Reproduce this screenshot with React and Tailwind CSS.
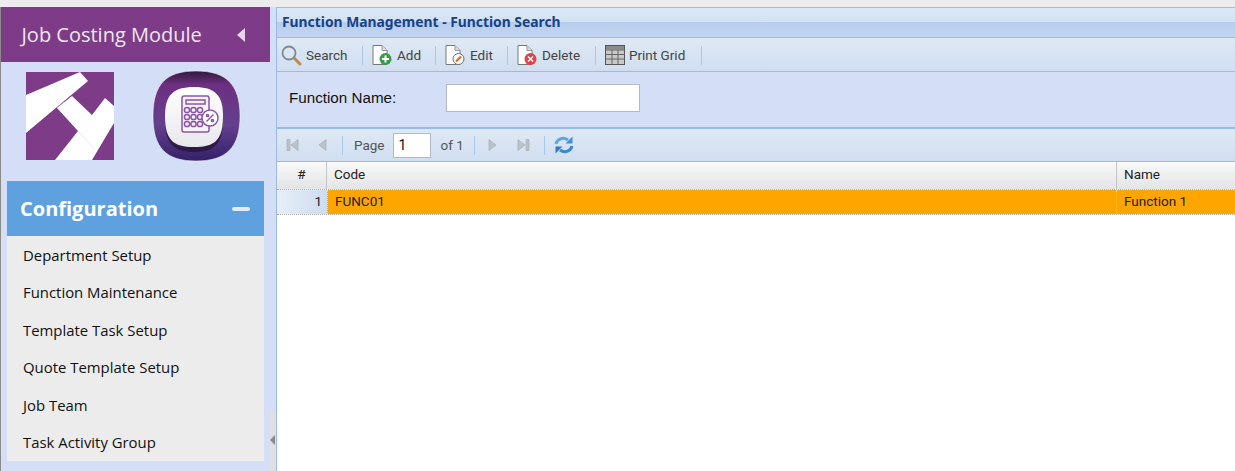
import React from 'react';

const menuItems = ['Department Setup', 'Function Maintenance', 'Template Task Setup', 'Quote Template Setup', 'Job Team', 'Task Activity Group'];

const DocIcon = ({ children }) => (
  <svg width="20" height="20" viewBox="0 0 20 20">
    <path d="M1 .5h9l5 5v14h-14z" fill="#fff" stroke="#77797c" />
    <path d="M10 .5v5h5" fill="#dcdcdc" stroke="#999" />
    {children}
  </svg>
);

const Sep = () => <div className="w-px h-[19px] bg-[#a9c6ec]" />;

const ToolButton = ({ icon, label, className }) => (
  <div className={`flex items-center ${className}`}>
    {icon}
    <span>{label}</span>
  </div>
);

const PagerArrow = ({ d }) => (
  <svg width="16" height="16" viewBox="0 0 16 16"><path d={d} fill="#bcc2c8" stroke="#a8aeb4" strokeWidth="0.7" /></svg>
);

const LogoMark = () => (
  <svg width="88" height="88" viewBox="0 0 88 88">
    <rect width="88" height="88" fill="#7e3b87" />
    <path d="M0 23L54 0L62 9L0 61z" fill="#fff" />
    <path d="M31 36L46 24L66 43L79 26L88 34V51L66 88H29L52 59z" fill="#fff" />
    <path d="M31 36L38 30M52 59L68 76" stroke="#d8d2e0" strokeWidth="0.6" />
  </svg>
);

const CalcLogo = () => (
  <svg width="90" height="92" viewBox="0 0 90 92">
    <defs>
      <linearGradient id="ring" x1="0" y1="0" x2="0" y2="1">
        <stop offset="0" stopColor="#2f1a3c" />
        <stop offset="0.15" stopColor="#6e2f80" />
        <stop offset="0.6" stopColor="#64408f" />
        <stop offset="1" stopColor="#34206a" />
      </linearGradient>
      <linearGradient id="face" x1="0" y1="0" x2="0" y2="1">
        <stop offset="0" stopColor="#fff" />
        <stop offset="1" stopColor="#e8e8ec" />
      </linearGradient>
    </defs>
    <path d="M44 1C74 1 88 14 88 46C88 78 74 91 44 91C14 91 1 78 1 46C1 14 14 1 44 1z" fill="url(#ring)" stroke="#fff" strokeOpacity="0.5" />
    <path d="M42 21C62 21 71 28 71 50C71 74 62 82 42 82C22 82 13 74 13 50C13 28 22 21 42 21z" fill="#24122f" opacity="0.7" />
    <path d="M42 17C63 17 71 25 71 46C71 70 63 77 42 77C21 77 13 70 13 46C13 25 21 17 42 17z" fill="url(#face)" />
    <g fill="none" stroke="#8a55a8" strokeWidth="1.5">
      <rect x="30" y="26" width="27" height="36" rx="2" fill="#f6f3f8" />
      <rect x="34" y="30" width="19" height="4" />
      <circle cx="35" cy="40" r="2.600" /><circle cx="41.500" cy="40" r="2.600" /><circle cx="48" cy="40" r="2.600" />
      <circle cx="35" cy="47" r="2.600" /><circle cx="41.500" cy="47" r="2.600" /><circle cx="48" cy="47" r="2.600" />
      <circle cx="35" cy="54" r="2.600" /><circle cx="41.500" cy="54" r="2.600" /><circle cx="48" cy="54" r="2.600" />
      <circle cx="58" cy="48" r="8" fill="#fff" />
      <path d="M54.500 51.500l7-7" />
      <circle cx="55.500" cy="45.500" r="1.100" /><circle cx="60.500" cy="50.500" r="1.100" />
    </g>
  </svg>
);

const Sidebar = () => (
  <aside className="w-[269px] shrink-0 bg-[#d5def7] flex flex-col" style={{ fontFamily: '"Open Sans", sans-serif' }}>
    <div className="h-[55px] bg-[#7e3b87] flex items-center justify-between pl-[20.500px] pr-[25px] text-[#f0e6f2] text-[20px]">
      <span>Job Costing Module</span>
      <span className="w-0 h-0 border-y-[7px] border-y-transparent border-r-[8px] border-r-[#e6d6ea]" />
    </div>
    <div className="h-[119px] flex items-start pl-[25px] pt-[10px]">
      <LogoMark />
      <div className="ml-[38px] -mt-[2px]"><CalcLogo /></div>
    </div>
    <div className="mx-[6px] bg-[#ececec]">
      <div className="h-[55px] bg-[#5fa0de] flex items-center justify-between pl-[13px] pr-[14px] text-white text-[20px] font-bold">
        <span>Configuration</span>
        <span className="w-[18px] h-[4px] rounded-sm bg-[#e3edf8]" />
      </div>
      <ul className="h-[225px] pl-[16px] flex flex-col text-[14.900px] text-[#111]">
        {menuItems.map((item) => (
          <li key={item} className="h-[37.600px] flex items-center">{item}</li>
        ))}
      </ul>
    </div>
  </aside>
);

const Toolbar = () => (
  <div className="h-[34px] pt-px border-b border-[#99bbe8] bg-gradient-to-b from-[#dfe9f5] to-[#d0def0] flex items-center text-[13.500px] text-[#444]">
    <ToolButton
      className="ml-[4px] w-[81px] gap-[4px]"
      label="Search"
      icon={
        <svg width="21" height="21" viewBox="0 0 21 21">
          <path d="M13 13l6 6" stroke="#c08a4a" strokeWidth="3" strokeLinecap="round" />
          <circle cx="8" cy="8" r="6.500" fill="#dbe6ef" stroke="#7d8a96" strokeWidth="1.800" />
        </svg>
      }
    />
    <Sep />
    <ToolButton
      className="ml-[9px] w-[63px] gap-[5px]"
      label="Add"
      icon={
        <DocIcon>
          <circle cx="13.500" cy="14" r="6" fill="#3b9a4b" />
          <path d="M13.500 10.500v7M10 14h7" stroke="#fff" strokeWidth="2" />
        </DocIcon>
      }
    />
    <Sep />
    <ToolButton
      className="ml-[9px] w-[62px] gap-[5px]"
      label="Edit"
      icon={
        <DocIcon>
          <circle cx="13.500" cy="14" r="5.500" fill="#fff" stroke="#6d6d6d" />
          <path d="M11 16.500l5-5" stroke="#d9662b" strokeWidth="2.200" />
        </DocIcon>
      }
    />
    <Sep />
    <ToolButton
      className="ml-[9px] w-[78px] gap-[5px]"
      label="Delete"
      icon={
        <DocIcon>
          <circle cx="13.500" cy="14" r="6" fill="#e0434a" />
          <path d="M11 11.500l5 5M16 11.500l-5 5" stroke="#fff" strokeWidth="1.500" />
        </DocIcon>
      }
    />
    <Sep />
    <ToolButton
      className="ml-[9px] w-[96px] gap-[4px]"
      label="Print Grid"
      icon={
        <svg width="20" height="20" viewBox="0 0 20 20">
          <rect x="0.500" y="0.500" width="19" height="19" fill="#c9c9c9" stroke="#555" />
          <rect x="1" y="1" width="18" height="3.500" fill="#8b8b8b" />
          <path d="M0.500 5h19M0.500 9.500h19M0.500 14h19M7 5v14.500M13 5v14.500" stroke="#666" />
        </svg>
      }
    />
    <Sep />
  </div>
);

const SearchForm = () => (
  <div
    className="h-[57px] bg-[#d5def7] border-b-2 border-[#99bbe8] flex items-start pl-[12px] pt-[12px] text-[15.200px] text-[#111]"
    style={{ fontFamily: '"Liberation Sans", sans-serif' }}
  >
    <span className="w-[157px] h-[28px] flex items-center">Function Name:</span>
    <input className="w-[194px] h-[28px] bg-white border border-[#b5b8c8] outline-none" />
  </div>
);

const Pager = () => (
  <div className="h-[33px] border-b border-[#99bbe8] bg-gradient-to-b from-[#dfe9f5] to-[#d0def0] flex items-center pl-[8px] text-[13.500px] text-[#555]">
    <PagerArrow d="M2 2.500h3v11h-3zM13 2.500v11l-7-5.500z" />
    <div className="w-[14px]" />
    <PagerArrow d="M11 2.500v11l-7-5.500z" />
    <div className="w-[11px]" />
    <div className="w-px h-[19px] bg-[#a9c6ec]" />
    <span className="ml-[11px]">Page</span>
    <div className="ml-[8px] w-[38px] h-[25px] bg-white border border-[#b5b8c8] flex items-center pl-[5px] text-[14px] text-[#111]">1</div>
    <span className="ml-[10px]">of 1</span>
    <div className="ml-[10px] w-px h-[19px] bg-[#a9c6ec]" />
    <div className="ml-[9px]"><PagerArrow d="M5 2.500v11l7-5.500z" /></div>
    <div className="ml-[15px]"><PagerArrow d="M3 2.500v11l7-5.500zM11 2.500h3v11h-3z" /></div>
    <div className="ml-[13px] w-px h-[19px] bg-[#a9c6ec]" />
    <svg className="ml-[9px]" width="20" height="20" viewBox="0 0 20 20" fill="none">
      <path d="M2 9C3 4 9 1.500 14 5" stroke="#5aa5e4" strokeWidth="3" />
      <path d="M18.500 1.500v7h-7z" fill="#3f8fd6" />
      <path d="M18 11C17 16 11 18.500 6 15" stroke="#3b88d0" strokeWidth="3" />
      <path d="M1.500 18.500v-7h7z" fill="#2f7dc6" />
    </svg>
  </div>
);

const Grid = () => (
  <div className="flex-1 bg-white text-[13.500px] text-[#222]">
    <div className="h-[27px] flex bg-gradient-to-b from-[#f9f9f9] to-[#e3e4e6]">
      <div className="w-[50px] border-r border-[#c5c5c5] text-center leading-[25px]">#</div>
      <div className="w-[790px] border-r border-[#c5c5c5] pl-[7px] leading-[25px]">Code</div>
      <div className="flex-1 pl-[7px] leading-[25px]">Name</div>
    </div>
    <div className="h-[26px] flex border-y border-dotted border-[#b0b0b0]">
      <div className="w-[50px] bg-gradient-to-r from-[#e7eef8] to-[#cddcf0] text-right pr-[5px] leading-[23px]">1</div>
      <div className="w-[790px] bg-[#ffa500] border-x border-dotted border-[#d8d8d8] pl-[7px] leading-[23px]">FUNC01</div>
      <div className="flex-1 bg-[#ffa500] pl-[7px] leading-[23px]">Function 1</div>
    </div>
  </div>
);

export default function App() {
  return (
    <div className="w-[1235px] h-[471px] overflow-hidden flex flex-col bg-[#ececec]" style={{ fontFamily: 'Roboto, sans-serif' }}>
      <div className="h-[7px] shrink-0" />
      <div className="flex-1 flex border-l border-[#8a8a8a] min-h-0">
        <Sidebar />
        <div className="w-[6px] shrink-0 flex flex-col bg-[#d5def7]">
          <div className="h-[404px]" />
          <div className="flex-1 bg-[#dfdfe3] flex items-start pt-[24px]">
            <span className="w-0 h-0 border-y-[5px] border-y-transparent border-r-[5px] border-r-[#8a8a8a]" />
          </div>
        </div>
        <main className="flex-1 min-w-0 flex flex-col border-l border-t border-[#99bbe8] bg-white">
          <div
            className="h-[30px] border-b border-[#99bbe8] flex items-center pl-[5px] text-[13.850px] font-bold text-[#15428b] bg-[linear-gradient(#dbe8f6_0%,#d3e2f3_47%,#b8cdec_50%,#c3d6f0_100%)]"
            style={{ fontFamily: '"Noto Sans", sans-serif' }}
          >
            Function Management - Function Search
          </div>
          <Toolbar />
          <SearchForm />
          <Pager />
          <Grid />
        </main>
      </div>
    </div>
  );
}
